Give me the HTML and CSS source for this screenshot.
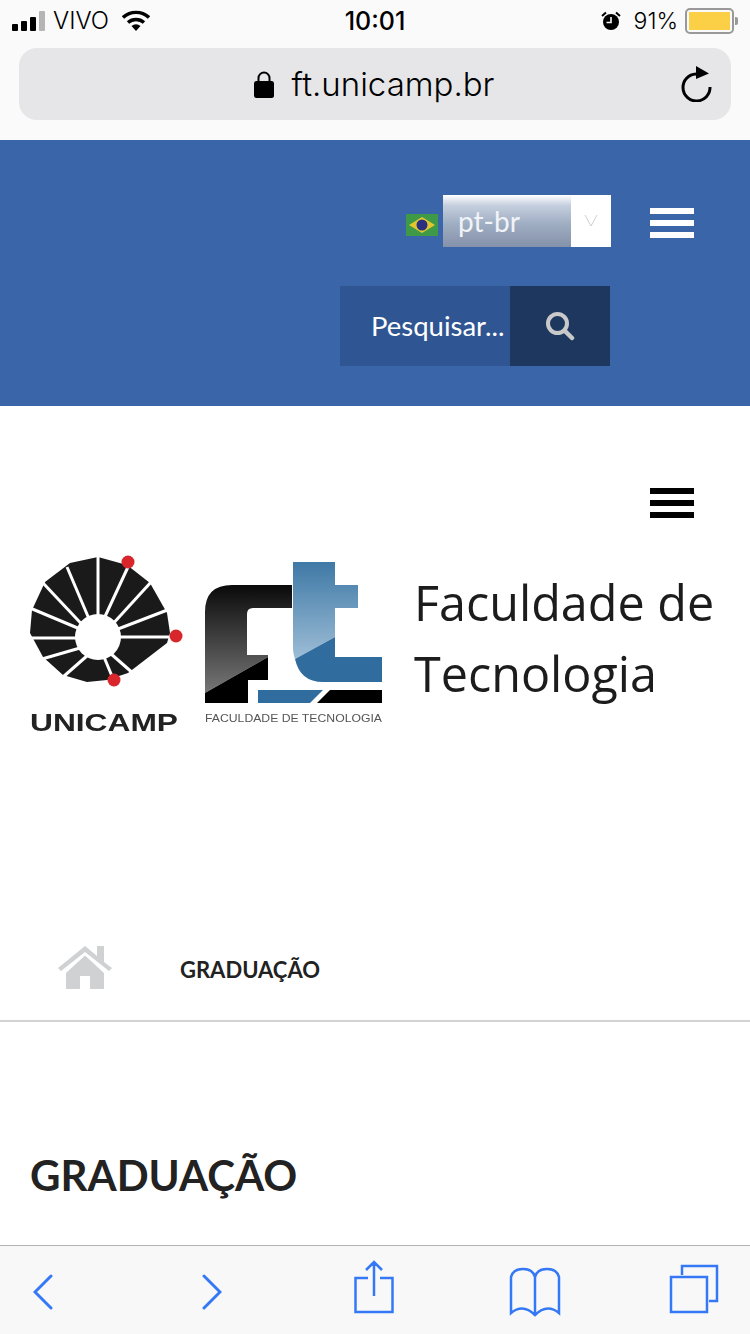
FILE: index.html
```html
<!DOCTYPE html>
<html lang="pt-br">

<head>
    <meta charset="UTF-8">
    <meta name="viewport" content="width=device-width, initial-scale=1.0">
    <title>GRADUAÇÃO</title>
    <link rel="stylesheet" href="styles.css">
</head>

<body>
    <div class="phone-top">
        <div class="status">
            <div class="status-left">
                <span class="signal"><i></i><i></i><i></i><i class="off"></i></span>
                <span class="carrier">VIVO</span>
                <svg class="wifi" width="28" height="22" viewBox="0 0 28 22">
                    <path d="M1 7.5 A19 19 0 0 1 27 7.5" fill="none" stroke="#000" stroke-width="3.4"/>
                    <path d="M6 12.5 A12 12 0 0 1 22 12.5" fill="none" stroke="#000" stroke-width="3.4"/>
                    <path d="M9.5 16 A7 7 0 0 1 18.5 16 L14 21 Z" fill="#000"/>
                </svg>
            </div>
            <div class="clock">10:01</div>
            <div class="status-right">
                <svg class="alarm" width="20" height="20" viewBox="0 0 20 20">
                    <circle cx="10" cy="11" r="8" fill="#000"/>
                    <path d="M10 6 V11.5 H5.5" fill="none" stroke="#fafafa" stroke-width="1.6"/>
                    <path d="M1 5 L5 1.5 M19 5 L15 1.5" stroke="#000" stroke-width="2"/>
                </svg>
                <span class="percent">91%</span>
                <span class="battery"><span class="battery-fill"></span></span>
                <span class="battery-tip"></span>
            </div>
        </div>
        <div class="urlbar">
            <svg class="lock" width="20" height="28" viewBox="0 0 20 28">
                <path d="M4.5 13 V8 A5.5 5.5 0 0 1 15.5 8 V13" fill="none" stroke="#000" stroke-width="2"/>
                <rect x="0" y="11" width="20" height="17" rx="2.5" fill="#000"/>
            </svg>
            <span class="url">ft.unicamp.br</span>
            <svg class="reload" width="32" height="36" viewBox="0 0 32 36">
                <path d="M15 8 A13.5 13.5 0 1 0 29 21" fill="none" stroke="#000" stroke-width="3"/>
                <path d="M15 0 L28 7.5 L15 13 Z" fill="#000"/>
            </svg>
        </div>
    </div>

    <div class="blue-head">
        <div class="lang-row">
            <svg class="flag" width="32" height="22" viewBox="0 0 32 22">
                <rect width="32" height="22" fill="#3f9a48"/>
                <path d="M16 3 L29 11 L16 19 L3 11 Z" fill="#e3c62e"/>
                <circle cx="16" cy="11" r="5.5" fill="#2b2f80"/>
            </svg>
            <div class="lang-select">
                <span class="lang-value">pt-br</span>
                <span class="lang-arrow">
                    <svg width="14" height="14" viewBox="0 0 14 14">
                        <path d="M1 1 L7 12 L13 1" fill="none" stroke="#cfcfcf" stroke-width="1"/>
                    </svg>
                </span>
            </div>
            <div class="burger white"><i></i><i></i><i></i></div>
        </div>
        <div class="search-row">
            <div class="search">
                <span class="search-text">Pesquisar...</span>
                <span class="search-btn">
                    <svg width="30" height="30" viewBox="0 0 30 30">
                        <circle cx="12.5" cy="12.5" r="9.5" fill="none" stroke="#c9c9c9" stroke-width="4"/>
                        <path d="M19.5 19.5 L27 27" stroke="#c9c9c9" stroke-width="4.5" stroke-linecap="round"/>
                    </svg>
                </span>
            </div>
        </div>
    </div>

    <div class="menu-row">
        <div class="burger"><i></i><i></i><i></i></div>
    </div>

    <div class="logos">
        <svg class="logo-unicamp" width="154" height="182" viewBox="0 0 154 182">
            <path d="M68 4 L40 10 L15 29 L2 57 L0 80 L13 104 L33 122 L57 129 L77 127 L98 120 L137 90 L140 80 L137 60 L120 30 L97 12 Z" fill="#1a1a1a"/>
            <circle cx="68" cy="84" r="23" fill="#fff"/>
            <g stroke="#fff" stroke-width="3">
                <path d="M68 84 V0"/>
                <path d="M65 80 L37 14"/>
                <path d="M60 80 L13 30"/>
                <path d="M50 76 L0 55"/>
                <path d="M46 85 H0"/>
                <path d="M50 95 L12 106"/>
                <path d="M58 102 L33 124"/>
                <path d="M72 70 L98 14"/>
                <path d="M80 74 L122 28"/>
                <path d="M88 76 L140 56"/>
                <path d="M90 84 H144"/>
                <path d="M80 100 L105 122"/>
                <path d="M74 104 L84 128"/>
            </g>
            <circle cx="98" cy="9" r="6.5" fill="#d9262c"/>
            <circle cx="146" cy="83" r="6.5" fill="#d9262c"/>
            <circle cx="84" cy="127" r="6.5" fill="#d9262c"/>
            <text x="0" y="178" class="unicamp-text" textLength="148" lengthAdjust="spacingAndGlyphs">UNICAMP</text>
        </svg>
        <svg class="logo-ft" width="178" height="162" viewBox="0 0 178 162">
            <defs>
                <linearGradient id="fgrad" x1="0" y1="0" x2="0" y2="1">
                    <stop offset="0" stop-color="#0a0a0a"/>
                    <stop offset="1" stop-color="#777"/>
                </linearGradient>
                <linearGradient id="tgrad" x1="0" y1="0" x2="0" y2="1">
                    <stop offset="0" stop-color="#3f79a6"/>
                    <stop offset="1" stop-color="#9dbdd6"/>
                </linearGradient>
            </defs>
            <path d="M0 131 V50 Q0 23 27 23 H87 V46 H48 Q42 46 42 52 V93 H63 V95 Z" fill="url(#fgrad)"/>
            <path d="M0 131 L63 95 V118 H43 V141 H0 Z" fill="#000"/>
            <path d="M88 0 H130 V23 H153 V46 H130 V75 L90 97 Q88 92 88 84 Z" fill="url(#tgrad)"/>
            <path d="M90 97 L130 75 V95 H177 V120 H118 Q95 120 90 97 Z" fill="#316c9f"/>
            <path d="M53 128 H118 L105 141 H53 Z" fill="#316c9f"/>
            <path d="M125 128 H177 V141 H112 Z" fill="#000"/>
            <text x="0" y="160" class="ft-text" textLength="177" lengthAdjust="spacingAndGlyphs">FACULDADE DE TECNOLOGIA</text>
        </svg>
        <div class="logo-name">Faculdade de<br>Tecnologia</div>
    </div>

    <div class="crumbs">
        <svg class="home" width="54" height="43" viewBox="0 0 54 43">
            <path d="M0 22 L27 0 L39 10 V0 H46 V16 L54 22 L51 25 L27 6 L3 25 Z" fill="#d0d1d2"/>
            <path d="M8 27 L27 9.5 L46 27 V43 H32 V30 H22 V43 H8 Z" fill="#d0d1d2"/>
        </svg>
        <span class="crumb-text">GRADUAÇÃO</span>
    </div>

    <h1 class="page-title">GRADUAÇÃO</h1>

    <div class="toolbar">
        <svg class="tool-back" width="20" height="36" viewBox="0 0 20 36"><path d="M18 2 L2 18 L18 34" class="tool-line"/></svg>
        <svg class="tool-back" width="20" height="36" viewBox="0 0 20 36"><path d="M2 2 L18 18 L2 34" class="tool-line"/></svg>
        <svg class="tool-share" width="40" height="54" viewBox="0 0 40 54">
            <path d="M14 18 H1.5 V52 H38.5 V18 H26 M20 36 V2 M12 10 L20 2 L28 10" class="tool-line thin"/>
        </svg>
        <svg class="tool-book" width="52" height="50" viewBox="0 0 52 50">
            <path d="M26 10 Q24 2 14 2 Q4 2 2 10 V46 Q14 36 26 48 Q38 36 50 46 V10 Q48 2 38 2 Q28 2 26 10 V48" class="tool-line thin"/>
        </svg>
        <svg class="tool-tabs" width="50" height="50" viewBox="0 0 50 50">
            <rect x="2" y="13" width="36" height="35" class="tool-line thin"/>
            <path d="M13 11 V2 H48 V37 H40" class="tool-line thin"/>
        </svg>
    </div>
</body>

</html>
```
FILE: styles.css
```css
body{
    margin: 0;
    height: 1334px;
    overflow: hidden;
    position: relative;
    background-color: #fff;
    font-family: "Lato", "Open Sans", sans-serif;
    color: #222;
}
.phone-top{
    height: 140px;
    box-sizing: border-box;
    background-color: #fafafa;
    font-family: "Inter", "Liberation Sans", sans-serif;
    color: #000;
}
.status{
    height: 48px;
    padding: 0 12px 7px 12px;
    display: grid;
    grid-template-columns: 1fr auto 1fr;
    align-items: center;
    box-sizing: border-box;
}
.status-left{
    display: flex;
    align-items: center;
}
.signal{
    display: flex;
    align-items: flex-end;
    gap: 3px;
    height: 20px;
    margin-right: 8px;
}
.signal i{
    display: block;
    width: 6px;
    background-color: #000;
    border-radius: 1px;
}
.signal i:nth-child(1){ height: 7px; }
.signal i:nth-child(2){ height: 10px; }
.signal i:nth-child(3){ height: 14px; }
.signal i:nth-child(4){ height: 20px; }
.signal i.off{
    background-color: #b5b5b5;
}
.carrier{
    font-size: 24px;
    font-weight: 300;
    margin-right: 13px;
}
.clock{
    font-size: 25px;
    font-weight: 500;
}
.status-right{
    display: flex;
    align-items: center;
    justify-content: flex-end;
}
.alarm{
    margin-right: 13px;
}
.percent{
    font-size: 23px;
    font-weight: 300;
    margin-right: 7px;
}
.battery{
    display: block;
    width: 41px;
    height: 18px;
    padding: 2px;
    border: 2px solid #999;
    border-radius: 5px;
}
.battery-fill{
    display: block;
    width: 100%;
    height: 100%;
    background-color: #fbcf46;
}
.battery-tip{
    display: block;
    width: 3px;
    height: 8px;
    margin-left: 1px;
    background-color: #999;
    border-radius: 0 2px 2px 0;
}
.urlbar{
    position: relative;
    margin: 0 19px;
    height: 72px;
    border-radius: 18px;
    background-color: #e6e6e8;
    display: flex;
    align-items: center;
    justify-content: center;
    gap: 18px;
}
.url{
    font-size: 33px;
    font-weight: 300;
    margin-right: 2px;
}
.reload{
    position: absolute;
    right: 18px;
    top: 18px;
}
.blue-head{
    height: 266px;
    box-sizing: border-box;
    background-color: #3b65a9;
    padding-top: 55px;
}
.lang-row{
    display: flex;
    align-items: center;
    padding-left: 406px;
}
.flag{
    margin-top: 8px;
    margin-right: 5px;
}
.lang-select{
    display: flex;
    width: 168px;
    height: 52px;
}
.lang-value{
    flex: 1;
    color: #f0f3f8;
    font-size: 28px;
    line-height: 52px;
    padding-left: 15px;
    background: linear-gradient(#fff 0%, #c5cfde 20%, #a0aec3 55%, #8491aa 100%);
}
.lang-arrow{
    width: 40px;
    background-color: #fff;
    display: flex;
    align-items: center;
    justify-content: center;
}
.burger{
    width: 44px;
}
.burger i{
    display: block;
    height: 6px;
    margin-bottom: 6px;
    background-color: #000;
}
.burger i:last-child{
    margin-bottom: 0;
}
.burger.white{
    margin-left: 39px;
    margin-top: 4px;
}
.burger.white i{
    background-color: #fff;
}
.search-row{
    padding: 39px 0 0 340px;
}
.search{
    width: 270px;
    height: 80px;
    display: flex;
    background-color: #2f5693;
}
.search-text{
    flex: 1;
    padding-left: 31px;
    color: #fff;
    font-size: 27.5px;
    line-height: 80px;
    white-space: nowrap;
}
.search-btn{
    width: 100px;
    background-color: #1e375f;
    display: flex;
    align-items: center;
    justify-content: center;
}
.menu-row{
    display: flex;
    justify-content: flex-end;
    padding: 82px 56px 0 0;
}
.logos{
    display: flex;
    align-items: flex-start;
    margin-top: 35px;
    padding-left: 30px;
    height: 382px;
}
.logo-unicamp{
    margin-right: 21px;
    filter: blur(0.5px);
}
.logo-ft{
    margin-top: 9px;
    margin-right: 31px;
    filter: blur(0.5px);
}
.unicamp-text{
    font-family: "Liberation Sans", sans-serif;
    font-weight: 700;
    font-size: 24px;
    fill: #222;
}
.ft-text{
    font-family: "Liberation Sans", sans-serif;
    font-size: 11px;
    fill: #555;
}
.logo-name{
    margin-top: 14px;
    font-family: "Open Sans", sans-serif;
    font-size: 48.5px;
    line-height: 71px;
    color: #1c1c1c;
    white-space: nowrap;
    filter: blur(0.4px);
}
.crumbs{
    display: flex;
    align-items: center;
    height: 87px;
    padding: 0 0 17px 58px;
    border-bottom: 2px solid #d2d2d2;
    box-sizing: border-box;
}
.home{
    margin-right: 68px;
    margin-bottom: 3px;
}
.crumb-text{
    font-size: 22px;
    font-weight: 700;
    color: #222;
}
.page-title{
    margin: 127px 0 0 30px;
    font-size: 42px;
    line-height: 52px;
    font-weight: 700;
    color: #222;
}
.toolbar{
    position: absolute;
    left: 0;
    right: 0;
    bottom: 0;
    height: 89px;
    box-sizing: border-box;
    border-top: 1px solid #b2b2b2;
    background-color: #f8f8f8;
    display: grid;
    grid-template-columns: 169px 152px 155px 160px 50px;
    align-items: center;
    padding-left: 33px;
}
.tool-back{
    margin-top: 4px;
}
.tool-share{
    margin-bottom: 6px;
}
.tool-book{
    margin-top: 4px;
}
.tool-tabs{
    margin-bottom: 2px;
}
.tool-line{
    fill: none;
    stroke: #3478f6;
    stroke-width: 3;
    stroke-linecap: round;
}
.tool-line.thin{
    stroke-width: 2.5;
    stroke-linecap: butt;
}
```
